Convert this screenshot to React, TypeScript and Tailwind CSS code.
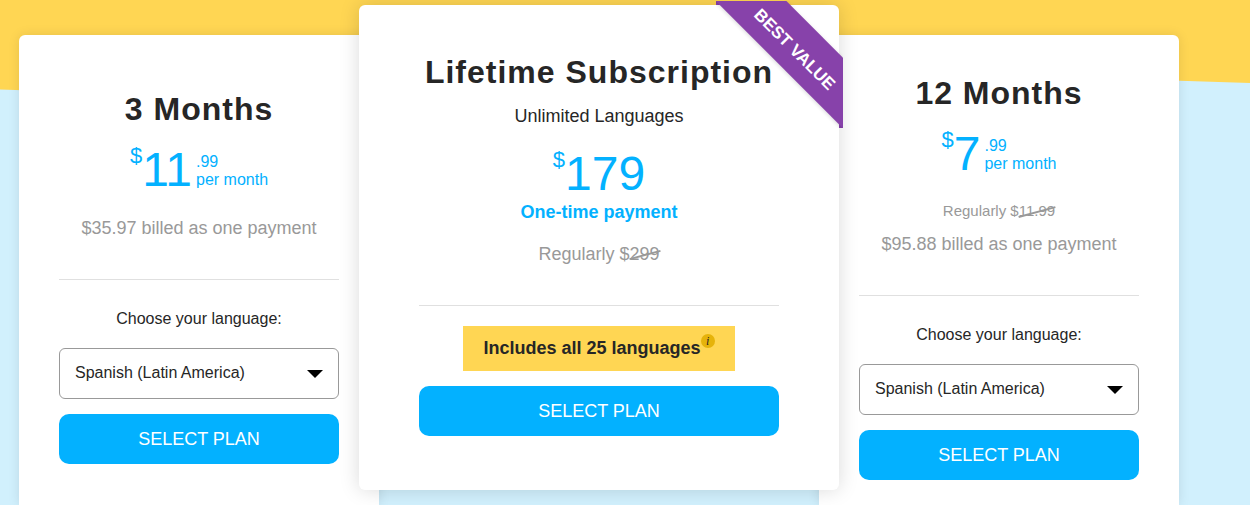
import { useId, type ReactNode } from "react";

function Price({ amount, cents, period }: { amount: string; cents?: string; period?: string }) {
  return (
    <div className="flex items-start justify-center text-[#03b1ff]">
      <span className="text-[22px] leading-5">$</span>
      <span className="text-5xl leading-12">{amount}</span>
      {cents && (
        <span className="mt-[7px] ml-1 flex flex-col text-left text-base leading-[18px]">
          <span>{cents}</span>
          <span>{period}</span>
        </span>
      )}
    </div>
  );
}

function Struck({ children }: { children: ReactNode }) {
  return (
    <s className="relative inline-block no-underline">
      {children}
      <span className="absolute inset-x-[-1px] top-1/2 h-0.5 -rotate-[15deg] bg-[#999]" />
    </s>
  );
}

function Title({ children }: { children: ReactNode }) {
  return <h2 className="text-[32px] leading-10 font-bold tracking-[1px]">{children}</h2>;
}

function Divider() {
  return <hr className="mt-[39px] border-t border-[#e0e0e0]" />;
}

function SelectPlan() {
  return (
    <button
      type="button"
      className="mt-[15px] h-[50px] w-full cursor-pointer rounded-[10px] bg-[#03b1ff] text-lg text-white"
    >
      SELECT PLAN
    </button>
  );
}

function LanguagePicker() {
  const id = useId();
  return (
    <div>
      <label htmlFor={id} className="mt-[27px] block text-base leading-6">
        Choose your language:
      </label>
      <div className="relative mt-[17px]">
        <select
          id={id}
          defaultValue="es-419"
          className="block h-[51px] w-full appearance-none rounded-md border border-[#999] bg-white pr-10 pb-0.5 pl-[15px] text-base text-[#262626]"
        >
          <option value="es-419">Spanish (Latin America)</option>
          <option value="es-ES">Spanish (Spain)</option>
          <option value="fr">French</option>
          <option value="de">German</option>
        </select>
        <svg
          viewBox="0 0 16 8"
          aria-hidden="true"
          className="pointer-events-none absolute top-[22px] right-4 h-2 w-4"
        >
          <path d="M0 0H16L8 8Z" fill="#000" />
        </svg>
      </div>
    </div>
  );
}

function Ribbon() {
  return (
    <div className="pointer-events-none absolute -top-1 -right-1 size-[127px] overflow-hidden">
      <span className="absolute top-0 left-0 h-1 w-2 bg-[#8742aa]" />
      <span className="absolute right-0 bottom-0 h-2 w-1 bg-[#8742aa]" />
      <span className="absolute top-[21px] -right-[67px] flex h-[50px] w-[226px] rotate-45 items-center justify-center bg-[#8742aa] pt-[7px] text-[17px] font-bold text-white shadow-[0_1px_4px_rgba(0,0,0,0.15)]">
        BEST VALUE
      </span>
    </div>
  );
}

const sideCard =
  "mt-[35px] min-w-0 rounded-t-md bg-white px-10 pb-6 shadow-[0_0_12px_rgba(0,0,0,0.1)]";

export default function App() {
  return (
    <main className="relative grid min-h-screen grid-cols-[9fr_11fr_9fr] overflow-hidden bg-[#d1f0fd] pr-[71px] pl-[19px] text-center font-['Liberation_Sans',Arial,sans-serif] text-[#262626]">
      <svg
        viewBox="0 0 1250 100"
        preserveAspectRatio="none"
        aria-hidden="true"
        className="absolute top-0 left-0 h-[100px] w-full"
      >
        <path d="M0 0H1250V83L1000 75L200 96L0 89.5Z" fill="#ffd653" />
      </svg>

      <section className={`relative pt-[54px] ${sideCard}`}>
        <Title>3 Months</Title>
        <div className="mt-[17px]">
          <Price amount="11" cents=".99" period="per month" />
        </div>
        <p className="mt-[22px] text-lg leading-6 text-[#999]">$35.97 billed as one payment</p>
        <Divider />
        <LanguagePicker />
        <SelectPlan />
      </section>

      <section className="relative z-10 mx-[-20px] mt-[5px] min-w-0 self-start rounded-md bg-white px-[60px] pt-[47px] pb-[54px] shadow-[0_0_20px_rgba(0,0,0,0.15)]">
        <Ribbon />
        <Title>Lifetime Subscription</Title>
        <p className="mt-3 text-lg leading-6">Unlimited Languages</p>
        <div className="mt-[22px]">
          <Price amount="179" />
        </div>
        <p className="mt-0.5 text-lg leading-6 font-bold text-[#03b1ff]">One-time payment</p>
        <p className="mt-[18px] text-lg leading-6 text-[#999]">
          Regularly $<Struck>299</Struck>
        </p>
        <Divider />
        <div className="mt-5 flex justify-center">
          <p className="flex h-[45px] items-center bg-[#ffd653] px-5 pb-0.5 text-lg font-bold">
            Includes all 25 languages
            <button
              type="button"
              aria-label="About the included languages"
              className="mb-3.5 flex size-3.5 items-center justify-center rounded-full bg-[#e6b30a] font-['Liberation_Serif',serif] text-xs leading-3 font-normal italic"
            >
              i
            </button>
          </p>
        </div>
        <SelectPlan />
      </section>

      <section className={`relative pt-[38px] ${sideCard}`}>
        <Title>12 Months</Title>
        <div className="mt-[17px]">
          <Price amount="7" cents=".99" period="per month" />
        </div>
        <p className="mt-[22px] text-[15px] leading-[22px] text-[#999]">
          Regularly $<Struck>11.99</Struck>
        </p>
        <p className="mt-2.5 text-lg leading-6 text-[#999]">$95.88 billed as one payment</p>
        <Divider />
        <LanguagePicker />
        <SelectPlan />
      </section>
    </main>
  );
}
